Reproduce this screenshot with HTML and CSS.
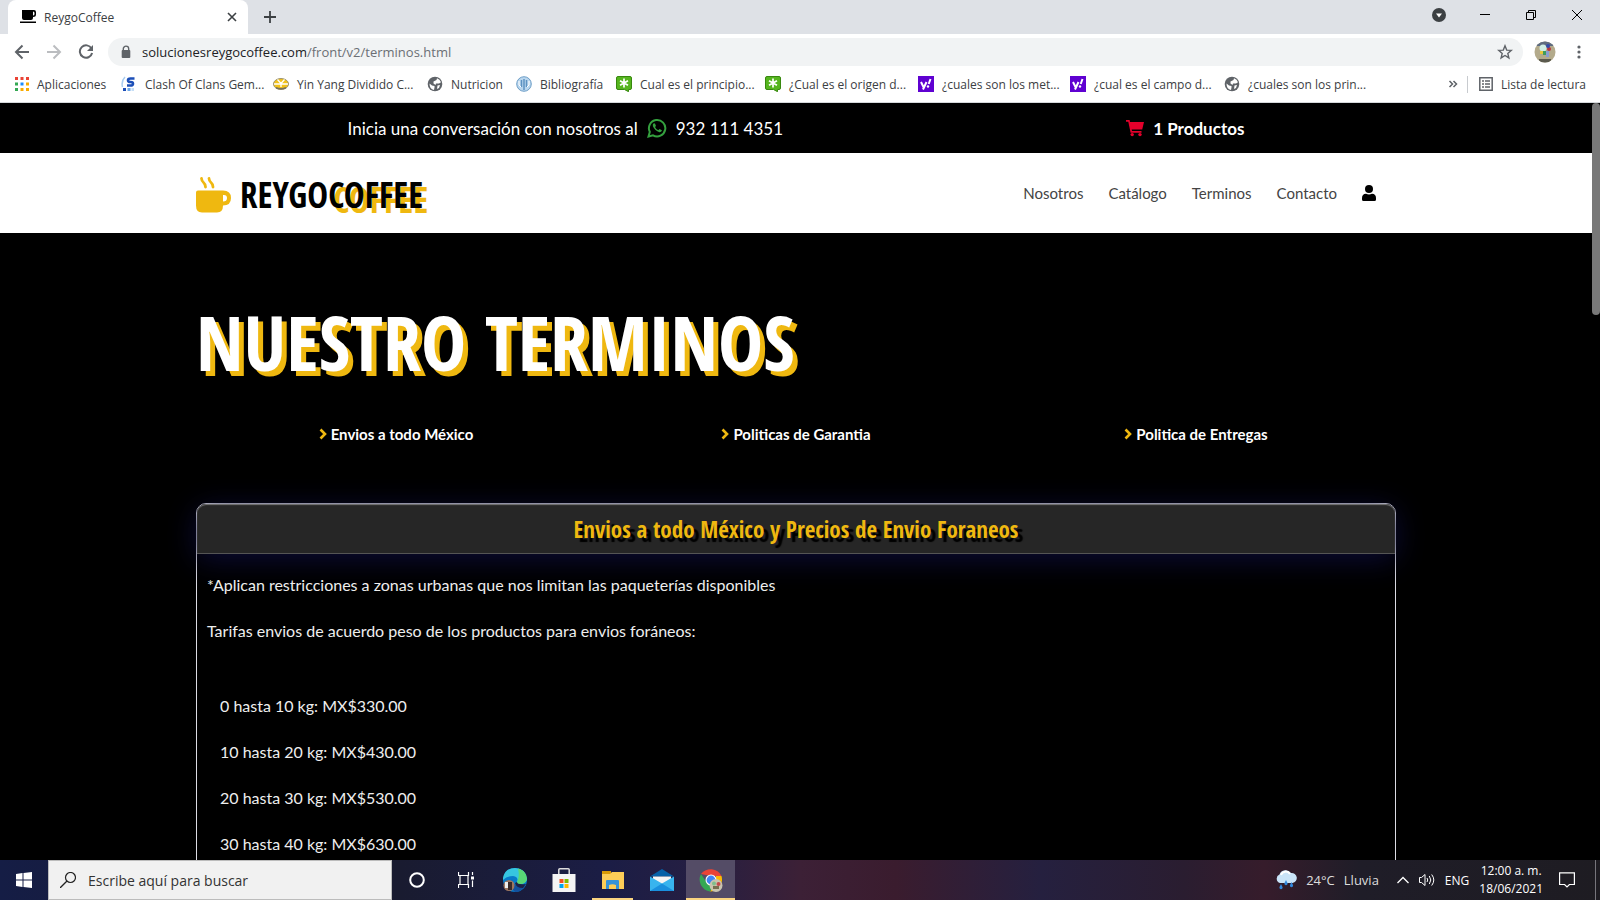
FILE: index.html
```html
<!DOCTYPE html>
<html lang="es">
<head>
<meta charset="utf-8">
<title>ReygoCoffee</title>
<link rel="stylesheet" href="styles.css">
</head>
<body>
<svg class="defs" aria-hidden="true">
  <symbol id="globe" viewBox="0 0 16 16"><circle cx="8" cy="8" r="7.300" fill="#5f6368"/><path d="M2.500 7.500 5 9.500 7.500 10v1.500L7 14Q2.500 13 2.500 7.500zM6.500 5.500 9.500 4l.5-1.800q3 1 4 4L12 7.500H9L8.500 9 6.500 7.500zM10.500 9.500l2.500-.5-1 3-2 1z" fill="#fff"/></symbol>
  <symbol id="asterisk" viewBox="0 0 16 16"><path d="M2 .5h12q1.500 0 1.500 1.500v10q0 1.500-1.500 1.500h-1.500v2.200L8.500 13.500H2Q.5 13.500.5 12V2Q.5.5 2 .5z" fill="#55b51e" stroke="#38880f"/><path d="M8 2.500v9M4 4.700l8 4.600M12 4.700 4 9.300" stroke="#fff" stroke-width="1.700"/></symbol>
  <symbol id="yahoo" viewBox="0 0 16 16"><path d="M0 0h16v16H0z" fill="#5f01d1"/><path d="m3 6 2.500 5M8.500 6 5 13.500M12.500 3l-1.800 5" stroke="#fff" stroke-width="2" fill="none"/><circle cx="10" cy="10.500" r="1.200" fill="#fff"/></symbol>
  <symbol id="chevron" viewBox="0 0 8 12"><path d="m1.500 1.500 4.500 4.500-4.500 4.500" fill="none" stroke="#efb810" stroke-width="2.600"/></symbol>
</svg>

<header class="browser">
  <div class="tabstrip">
    <div class="tab">
      <svg class="i16" viewBox="0 0 16 16"><path d="M2 1h12q2 0 2 2v2.500q0 2.500-3 2.500v1q0 2-2 2H4q-2 0-2-2zm11 1.500v4q1.500 0 1.500-1.500V4q0-1.500-1.500-1.500zM0 12.500h16V14H0z"/></svg>
      <span class="tab-title">ReygoCoffee</span>
      <button class="plain" aria-label="Cerrar pestaña"><svg class="i10" viewBox="0 0 10 10"><path d="m1 1 8 8M9 1 1 9" stroke="#3c4043" stroke-width="1.600"/></svg></button>
    </div>
    <button class="plain newtab" aria-label="Nueva pestaña"><svg class="i12" viewBox="0 0 12 12"><path d="M6 0v12M0 6h12" stroke="#3c4043" stroke-width="1.800"/></svg></button>
    <div class="window-buttons">
      <button class="plain" aria-label="Buscar pestañas"><svg class="i14" viewBox="0 0 14 14"><circle cx="7" cy="7" r="7" fill="#3c4043"/><path d="M4 5.500h6L7 9.500z" fill="#fff"/></svg></button>
      <button class="plain" aria-label="Minimizar"><svg class="i10" viewBox="0 0 10 10"><path d="M0 4.500h10" stroke="#000"/></svg></button>
      <button class="plain" aria-label="Restaurar"><svg class="i10" viewBox="0 0 10 10"><path d="M.5 2.500h7v7h-7zM2.500 2V.5h7v7H8" fill="none" stroke="#000"/></svg></button>
      <button class="plain" aria-label="Cerrar"><svg class="i10" viewBox="0 0 10 10"><path d="m0 0 10 10M10 0 0 10" stroke="#000"/></svg></button>
    </div>
  </div>

  <div class="toolbar">
    <button class="plain" aria-label="Atrás"><svg class="i16" viewBox="0 0 16 16"><path d="M15 8H2M8.500 1.500 2 8l6.500 6.500" fill="none" stroke="#5f6368" stroke-width="2"/></svg></button>
    <button class="plain" aria-label="Adelante"><svg class="i16" viewBox="0 0 16 16"><path d="M1 8h13M7.500 1.500 14 8l-6.500 6.500" fill="none" stroke="#bbbdc0" stroke-width="2"/></svg></button>
    <button class="plain" aria-label="Recargar"><svg class="i16" viewBox="0 0 16 16"><path d="M13.500 4.500A6.200 6.200 0 1 0 14.100 9" fill="none" stroke="#5f6368" stroke-width="2"/><path d="M15 1v6H9z" fill="#5f6368"/></svg></button>
    <div class="omnibox">
      <svg class="i14" viewBox="0 0 14 14"><path d="M4.300 6V3.800a2.700 2.700 0 0 1 5.400 0V6" fill="none" stroke="#5f6368" stroke-width="1.400"/><rect x="2.700" y="5" width="8.600" height="8" rx="1" fill="#5f6368"/></svg>
      <div class="url"><span class="host">solucionesreygocoffee.com</span>/front/v2/terminos.html</div>
      <button class="plain" aria-label="Añadir a marcadores"><svg class="i16" viewBox="0 0 16 16"><path d="m8 1.800 1.700 4.300 4.600.3-3.500 3 1.100 4.500L8 11.500l-3.900 2.400 1.100-4.500-3.500-3 4.600-.3z" fill="none" stroke="#5f6368" stroke-width="1.400"/></svg></button>
    </div>
    <button class="plain" aria-label="Perfil"><svg class="i22" viewBox="0 0 22 22"><clipPath id="av"><circle cx="11" cy="11" r="10.500"/></clipPath><g clip-path="url(#av)"><path d="M0 0h22v22H0z" fill="#b3aa8b"/><path d="M0 0h22v5H0z" fill="#5f6c80"/><circle cx="9" cy="7" r="3.500" fill="#cfeee4"/><circle cx="15" cy="8" r="2" fill="#b9353e"/><circle cx="14" cy="5" r="2" fill="#334ba8"/><path d="M6 10h3v3H6z" fill="#e8c63a"/><path d="M9 10h3v4H9z" fill="#3f9c5d"/><path d="M12 10h3v6h-3z" fill="#8b9ed0"/><path d="M5 18h12v4H5z" fill="#5b5a4e"/></g></svg></button>
    <button class="plain menu" aria-label="Menú"><svg class="i14" viewBox="0 0 14 14" fill="#5f6368"><circle cx="7" cy="2" r="1.600"/><circle cx="7" cy="7" r="1.600"/><circle cx="7" cy="12" r="1.600"/></svg></button>
  </div>

  <nav class="bookmarks" aria-label="Marcadores">
    <a href="#"><svg class="i14" viewBox="0 0 14 14"><path d="M0 0h3v3H0zM5.500 0h3v3h-3zM11 0h3v3h-3z" fill="#ea4335"/><path d="M0 5.500h3v3H0zM0 11h3v3H0z" fill="#34a853"/><path d="M5.500 5.500h3v3h-3z" fill="#1a8cff"/><path d="M11 5.500h3v3h-3zM5.500 11h3v3h-3zM11 11h3v3h-3z" fill="#f9ab00"/></svg>Aplicaciones</a>
    <a href="#"><svg class="i16" viewBox="0 0 16 16"><path d="M4 1Q0 5 1.500 11" stroke="#a9cdf0" stroke-width="1.500" fill="none"/><path d="M13.500 2.500H9.500Q7 2.500 7 4.300T9.500 6t2.500 1.700-2.500 1.800H6" stroke="#1c4fb8" stroke-width="2.600" fill="none"/><path d="M2 12h3v3H2z" fill="#1c4fb8"/><path d="M6.500 12h3v3h-3z" fill="#6ea8e8"/><path d="M10.500 12H13v3h-2.500z" fill="#c5def6"/></svg>Clash Of Clans Gem...</a>
    <a href="#"><svg class="i16" viewBox="0 0 16 16"><ellipse cx="8" cy="8" rx="7.500" ry="5.500" fill="#f2c21a" stroke="#9c9372"/><path d="M1 8h14M4.500 3.500 8 7.500l3.500-4M8 7v4" stroke="#fff" stroke-width="1.300" fill="none"/><path d="M3 11.800q5 2 10 0" stroke="#77715c" stroke-width="1.500" fill="none"/></svg>Yin Yang Dividido C...</a>
    <a href="#"><svg class="i16"><use href="#globe"/></svg>Nutricion</a>
    <a href="#"><svg class="i16" viewBox="0 0 16 16"><circle cx="8" cy="8" r="7.300" fill="#b9d6ee" stroke="#6f9fc8"/><path d="M8 3v11M5.500 4v7M10.500 4v7" stroke="#5d92c2" stroke-width="1.500" fill="none"/><path d="M3 5v4l2 2M13 5v4l-2 2" stroke="#fff" fill="none"/></svg>Bibliografía</a>
    <a href="#"><svg class="i16"><use href="#asterisk"/></svg>Cual es el principio...</a>
    <a href="#"><svg class="i16"><use href="#asterisk"/></svg>¿Cual es el origen d...</a>
    <a href="#"><svg class="i16"><use href="#yahoo"/></svg>¿cuales son los met...</a>
    <a href="#"><svg class="i16"><use href="#yahoo"/></svg>¿cual es el campo d...</a>
    <a href="#"><svg class="i16"><use href="#globe"/></svg>¿cuales son los prin...</a>
    <button class="plain more" aria-label="Más marcadores"><svg class="i10" viewBox="0 0 10 10"><path d="m1.500 2 3 3-3 3M5.500 2l3 3-3 3" fill="none" stroke="#5f6368" stroke-width="1.500"/></svg></button>
    <a href="#" class="reading"><svg class="i14" viewBox="0 0 14 14"><path d="M.8.8h12.400v12.400H.8z" fill="none" stroke="#5f6368" stroke-width="1.500"/><path d="M3 4h2M3 7h2M3 10h2M6 4h5M6 7h5M6 10h5" stroke="#5f6368" stroke-width="1.500"/></svg>Lista de lectura</a>
  </nav>
</header>

<div class="viewport">
  <div class="page">
    <div class="topbar">
      <div class="container topbar-row">
        <p class="talk">Inicia una conversación con nosotros al
          <svg class="i20" viewBox="0 0 20 20"><path d="m1.500 18.500 1.300-4.600A8.200 8.200 0 1 1 6 17.300z" fill="none" stroke="#34a03e" stroke-width="2"/><path d="M6.800 5.300q-1.500 1-.9 3 2 4.500 6.500 6 2 .1 2.600-2l-2.500-1.300-1.200 1.300q-2.300-1-3.300-3.200l1-1.100-1-2.500z" fill="#34a03e"/></svg>
          932 111 4351</p>
        <a href="#" class="cart"><svg class="i18" viewBox="0 0 18 18"><path d="M0 1h3.600l.4 2H18l-1.800 7.500H5.700L6 12h9.500v1.700H4.600L2.300 2.700H0z" fill="#e4002b"/><circle cx="6.200" cy="15.600" r="1.700" fill="#e4002b"/><circle cx="14" cy="15.600" r="1.700" fill="#e4002b"/></svg>1 Productos</a>
      </div>
    </div>

    <div class="masthead">
      <div class="container masthead-row">
        <a href="#" class="logo">
          <svg class="i36" viewBox="0 0 36 36"><path d="M2 13.500h25q8 0 8 7.500t-8 7.500q0 7-6 7H6q-6 0-6-7v-13q0-2 2-2zm25 4.500v6.500q4 0 4-3.500t-4-3z" fill="#efb810" fill-rule="evenodd"/><path d="M5.500 1.500q.2 2.600 2 4t2 4.500M13 1.500q.2 2.600 2 4T17 10" fill="none" stroke="#efb810" stroke-width="2.800" stroke-linecap="round"/></svg>
          <span class="wordmark">REYGO<span class="shade">COFFEE</span></span>
        </a>
        <nav class="menu-links">
          <a href="#">Nosotros</a><a href="#">Catálogo</a><a href="#">Terminos</a><a href="#">Contacto</a>
          <a href="#" aria-label="Cuenta"><svg class="user" viewBox="0 0 14 16"><circle cx="7" cy="4" r="4"/><path d="M0 13q0-4 4-4.200 3 1.400 6 0 4 .2 4 4.200v1.500Q14 16 12.500 16h-11Q0 16 0 14.500z"/></svg></a>
        </nav>
      </div>
    </div>

    <main class="container">
      <h1>NUESTRO TERMINOS</h1>
      <nav class="sections">
        <a href="#envios"><svg class="arrow"><use href="#chevron"/></svg>Envios a todo México</a>
        <a href="#garantia"><svg class="arrow"><use href="#chevron"/></svg>Politicas de Garantia</a>
        <a href="#entregas"><svg class="arrow"><use href="#chevron"/></svg>Politica de Entregas</a>
      </nav>
      <section class="card" id="envios">
        <h2>Envios a todo México y Precios de Envio Foraneos</h2>
        <div class="card-body">
          <p>*Aplican restricciones a zonas urbanas que nos limitan las paqueterías disponibles</p>
          <p>Tarifas envios de acuerdo peso de los productos para envios foráneos:</p>
          <ul>
            <li>0 hasta 10 kg: MX$330.00</li>
            <li>10 hasta 20 kg: MX$430.00</li>
            <li>20 hasta 30 kg: MX$530.00</li>
            <li>30 hasta 40 kg: MX$630.00</li>
          </ul>
        </div>
      </section>
    </main>
  </div>
  <div class="scrollbar"><div class="thumb"></div></div>
</div>

<footer class="taskbar">
  <button class="plain start" aria-label="Inicio"><svg class="i16" viewBox="0 0 16 16"><path d="m0 2 6.500-1v6.500H0zM7.500.9 16 0v7.500H7.500zM0 8.500h6.500V15L0 14zM7.500 8.500H16V16l-8.500-1z" fill="#fff"/></svg></button>
  <label class="search"><svg class="i16" viewBox="0 0 16 16"><circle cx="10.500" cy="5.500" r="5" fill="none" stroke="#222" stroke-width="1.200"/><path d="M7 9 0 16" stroke="#222" stroke-width="1.300"/></svg><input type="text" aria-label="Buscar" placeholder="Escribe aquí para buscar"></label>
  <div class="apps">
    <button class="plain" aria-label="Cortana"><svg class="i16" viewBox="0 0 16 16"><circle cx="8" cy="8" r="6.800" fill="none" stroke="#fff" stroke-width="2"/></svg></button>
    <button class="plain" aria-label="Vista de tareas"><svg class="i16" viewBox="0 0 16 16"><path d="M.5 0v3.500h10V0M.5 16v-3.500h10V16M2 3.500v9M10 3.500v9M14.500 0v3M14.500 8.500V15" fill="none" stroke="#fff" stroke-width="1.200"/><path d="M13 4.500h3v3h-3z" fill="#fff"/></svg></button>
    <button class="plain" aria-label="Edge"><svg class="i24" viewBox="0 0 24 24"><circle cx="12" cy="12" r="12" fill="#087ac8"/><path d="M0 10Q2 0 12 0t12 11q-1 5-7 5-3 0-3-2 2-5-4-6-6 0-10 4z" fill="#36c6e0"/><path d="M15 .5Q24 3 24 11q-1 5-7 5-3 0-3-2 3-5 1-13.500z" fill="#58d875"/><path d="M9 11q-1 8 13 7-4 6-10 6-5-4-3-13z" fill="#13509d"/><path d="M14 14q0 3 9 2l-3 4q-7 0-8-5z" fill="#1c2146"/><circle cx="6" cy="17.500" r="5.500" fill="#9d7660"/><path d="M5 14h4v8H5z" fill="#3a2a29"/><path d="M2 14h3v6H2z" fill="#eee"/></svg></button>
    <button class="plain" aria-label="Tienda"><svg class="i24" viewBox="0 0 24 24"><path d="M6.800 6.500V1.800q0-1 1-1h8.400q1 0 1 1v4.700" fill="none" stroke="#ddd" stroke-width="1.500"/><path d="M.5 6h23v18H.5z" fill="#f4f4f4"/><path d="M7.500 11h4v4h-4z" fill="#f25022"/><path d="M12.500 11h4v4h-4z" fill="#7fba00"/><path d="M7.500 16h4v4h-4z" fill="#00a4ef"/><path d="M12.500 16h4v4h-4z" fill="#ffb900"/></svg></button>
    <button class="plain open" aria-label="Explorador"><svg class="i22" viewBox="0 0 22 22"><path d="M0 2h9v3H0z" fill="#d99a06"/><path d="M0 5h8l2-2h12v17H0z" fill="#fdcd57"/><path d="M4 20v-8q0-1 1-1h11q1 0 1 1v8h-3v-4q-3.500-1.500-7 0v4z" fill="#3693d8"/></svg></button>
    <button class="plain" aria-label="Correo"><svg class="i24" viewBox="0 0 24 24"><path d="M0 8.500 12 1l12 7.500z" fill="#0561a8"/><path d="M3 8.500h18V16H3z" fill="#f5f5f5"/><path d="m0 8.500 12 7 12-7V23H0z" fill="#38b4ee"/><path d="m12 15.500 12 7.500H0z" fill="#1a90de"/></svg></button>
    <button class="plain active" aria-label="Chrome"><svg class="i24" viewBox="0 0 24 24"><path d="M2 6a12 12 0 0 1 20.500 2H12z" fill="#ea4335"/><path d="M22.500 8A12 12 0 0 1 11 23.500L17 14V8z" fill="#fbbc04"/><path d="M2 6A12 12 0 0 0 11 23.500l4-7-8-3z" fill="#34a853"/><circle cx="12" cy="12" r="5.500" fill="#fff"/><circle cx="12" cy="12" r="4.400" fill="#4285f4"/><circle cx="17" cy="17.500" r="6.500" fill="#c9c4ae"/><circle cx="15" cy="15.500" r="2" fill="#7fbf8c"/><circle cx="19.500" cy="16" r="2" fill="#c44b4a"/><path d="M14 18h6v3h-6z" fill="#77704f"/></svg></button>
  </div>
  <div class="tray">
    <button class="plain weather"><svg class="i22" viewBox="0 0 22 22"><path d="M5 14a4.500 4.500 0 0 1-.5-8.500A6.500 6.500 0 0 1 16 4a5 5 0 0 1 1.500 10z" fill="#c9e4f8"/><path d="M6 6a5 5 0 0 1 9-1" stroke="#fff" stroke-width="2" fill="none"/><path d="m11 11-1.500 3a1.600 1.600 0 1 0 3 0zM6 15l-1.500 3a1.600 1.600 0 1 0 3 0zM16.500 13 15 16a1.600 1.600 0 1 0 3 0z" fill="#3388dd"/></svg><span>24°C</span><span>Lluvia</span></button>
    <button class="plain" aria-label="Iconos ocultos"><svg class="i12" viewBox="0 0 12 12"><path d="m.5 9 5.500-5.500L11.500 9" fill="none" stroke="#fff" stroke-width="1.300"/></svg></button>
    <button class="plain" aria-label="Volumen"><svg class="i16" viewBox="0 0 16 16" fill="none" stroke="#fff"><path d="M.5 5.500h2L6 2.500v11l-3.500-3h-2zM8 6q1.500 2 0 4M10.300 4q3 4 0 8M12.700 2.500q4.200 5.500 0 11"/></svg></button>
    <span>ENG</span>
    <div class="clock"><span>12:00 a. m.</span><span>18/06/2021</span></div>
    <button class="plain" aria-label="Notificaciones"><svg class="i16" viewBox="0 0 16 16"><path d="M.6.800h14.800v11.700h-5L8 15l-2.400-2.500h-5z" fill="none" stroke="#fff" stroke-width="1.200"/></svg></button>
  </div>
</footer>
</body>
</html>
```
FILE: styles.css
```css
* { box-sizing: border-box; }
body {
  margin: 0;
  height: 100vh;
  display: flex;
  flex-direction: column;
  overflow: hidden;
  font-family: "Open Sans", "Noto Sans", sans-serif;
  background: #000;
}
h1, h2, p, ul { margin: 0; padding: 0; }
ul { list-style: none; }
a { color: inherit; text-decoration: none; }
svg { display: block; flex: none; }
.defs { display: none; }
.plain {
  border: 0;
  padding: 0;
  background: none;
  color: inherit;
  font: inherit;
  display: flex;
  align-items: center;
  justify-content: center;
}
.i10 { width: 10px; height: 10px; }
.i12 { width: 12px; height: 12px; }
.i14 { width: 14px; height: 14px; }
.i16 { width: 16px; height: 16px; }
.i18 { width: 18px; height: 18px; }
.i20 { width: 20px; height: 20px; }
.i22 { width: 22px; height: 22px; }
.i24 { width: 24px; height: 24px; }
.i36 { width: 36px; height: 36px; }

/* Browser frame */
.browser { flex: none; background: #fff; border-bottom: 1px solid #d5d8db; font-size: 12px; color: #3c4043; }
.tabstrip { display: flex; height: 34px; background: #dee1e6; padding-left: 8px; }
.tab {
  width: 240px;
  display: flex;
  align-items: center;
  gap: 8px;
  padding: 0 11px 0 12px;
  background: #fff;
  border-radius: 8px 8px 0 0;
}
.tab-title { flex: 1; }
.newtab { width: 44px; }
.window-buttons { margin-left: auto; display: flex; }
.window-buttons .plain { width: 46px; height: 30px; }
.toolbar { display: flex; align-items: center; height: 36px; gap: 16px; padding: 0 14px; }
.omnibox {
  flex: 1;
  display: flex;
  align-items: center;
  gap: 9px;
  height: 28px;
  padding: 0 10px 0 11px;
  border-radius: 14px;
  background: #f1f3f4;
  margin: 0 -5px 0 -2px;
}
.url { flex: 1; font-size: 13px; color: #6b6f74; }
.host { color: #202124; }
.menu { width: 14px; }
.bookmarks {
  display: grid;
  grid-template-columns: 106px 152px 154px 89px 100px 149px 153px 152px 154px 1fr auto auto;
  align-items: center;
  height: 32px;
  padding: 0 14px 4px 15px;
  font-size: 12px;
  white-space: nowrap;
}
.bookmarks a { display: flex; align-items: center; gap: 8px; }
.more { margin-right: 9px; }
.bookmarks .reading { border-left: 1px solid #c8cbcf; padding-left: 11px; }

/* Web page */
.viewport { flex: 1; min-height: 0; display: flex; overflow: hidden; color: #fff; font-family: Lato, "Open Sans", sans-serif; }
.page { flex: 1; min-width: 0; }
.scrollbar { width: 8px; background: #000; }
.thumb { height: 28%; border-radius: 4px; background: #787878; }
.container { max-width: 1200px; margin: 0 auto; }
.topbar-row { display: flex; justify-content: space-around; align-items: center; height: 50px; font-size: 17px; }
.talk { display: flex; align-items: center; gap: 9px; padding-right: 40px; }
.cart { display: flex; align-items: center; gap: 9px; font-weight: 700; }
.masthead { background: #fff; color: #444; }
.masthead-row { display: flex; justify-content: space-between; align-items: center; height: 80px; padding-right: 20px; }
.logo { display: flex; align-items: center; gap: 8px; padding-top: 4px; }
.wordmark { font: 700 35px/40px "Open Sans Condensed", "Liberation Sans Narrow", "DejaVu Sans Condensed", sans-serif; color: #000; }
.shade { text-shadow: 5px 5px 0 #efb810; }
.menu-links { display: flex; align-items: center; gap: 25px; font-size: 15px; }
.user { width: 14px; height: 16px; fill: #000; }
h1 {
  padding-top: 60px;
  font: 700 76px/98px "Open Sans Condensed", "Liberation Sans Narrow", "DejaVu Sans Condensed", sans-serif;
  text-shadow: 5px 5px 0 #efb810;
  white-space: nowrap;
}
.sections { display: grid; grid-template-columns: repeat(3, 1fr); padding: 31px 0 57px; font-size: 15px; line-height: 24px; font-weight: 700; }
.sections a { display: flex; align-items: center; justify-content: center; gap: 4px; }
.arrow { width: 8px; height: 12px; }
.card { border: 1px solid #dcdce4; border-radius: 10px 10px 0 0; }
.card h2 {
  padding-top: 2px;
  font: 700 23px/47px "Open Sans Condensed", "Liberation Sans Narrow", "DejaVu Sans Condensed", sans-serif;
  text-align: center;
  color: #efb810;
  background: #262626;
  border-bottom: 1px solid #555;
  border-radius: 9px 9px 0 0;
  text-shadow: 5px 4px 1px #000;
  box-shadow: 0 5px 30px #0c0c38, inset 0 1px 1px #777;
}
.card-body { padding: 19px 10px; font-size: 16px; line-height: 24px; color: #eee; }
.card-body p { margin-bottom: 22px; }
.card-body ul { padding: 29px 0 0 13px; }
.card-body li { margin-bottom: 22px; }

/* Desktop taskbar */
.taskbar {
  flex: none;
  display: flex;
  height: 40px;
  color: #fff;
  font-size: 12px;
  background: linear-gradient(90deg, #151d45 0, #191b30 25%, #1b1d45 38%, #261f42 44%, #3c2036 50%, #3a1c2e 56%, #25203f 65%, #2a1d30 74%, #361c2b 79%, #1f1d28 85%, #1e1c22 100%);
}
.start { width: 48px; }
.search { width: 344px; display: flex; align-items: center; gap: 12px; padding-left: 11px; background: #f1f1f1; border: 1px solid #bcbcbc; }
.search input { flex: 1; min-width: 0; border: 0; background: none; padding: 0; outline: 0; font: 14px "Open Sans", sans-serif; }
.search input::placeholder { color: #333; opacity: 1; }
.apps { display: flex; }
.apps .plain { width: 49px; border-bottom: 2px solid transparent; border-top: 2px solid transparent; }
.apps .open { width: 41px; margin: 0 4px; border-bottom-color: #fbd580; }
.apps .active { background: #544c66; border-bottom-color: #fbd580; border-top-color: #544c66; }
.tray { margin-left: auto; display: flex; align-items: center; gap: 10px; padding-right: 20px; border-right: 1px solid #77757c; margin-right: 4px; }
.weather { gap: 9px; font-size: 13px; margin-right: 8px; color: #ddd; }
.clock { display: flex; flex-direction: column; align-items: center; line-height: 18px; margin: 0 6px 0 0; }
```
